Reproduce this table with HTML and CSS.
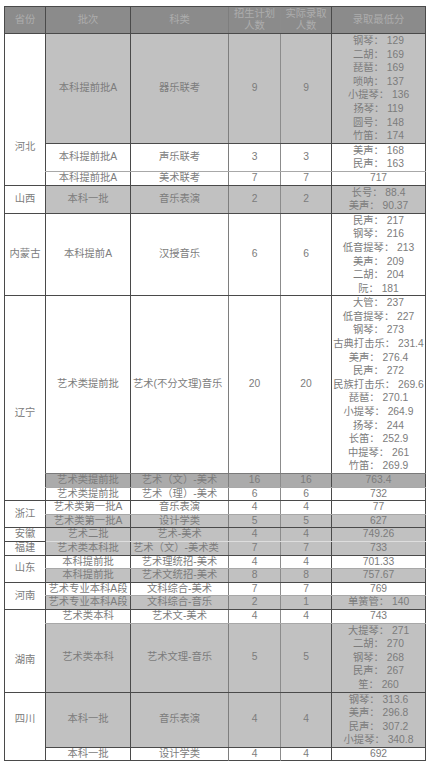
FILE: index.html
```html
<!DOCTYPE html>
<html lang="zh-CN">
<head>
<meta charset="utf-8">
<title>录取分数</title>
<link rel="stylesheet" href="styles.css">
</head>
<body>
<table class="tbl">
<colgroup>
<col class="c1"><col class="c2"><col class="c3"><col class="c4"><col class="c5"><col class="c6">
</colgroup>
<thead>
<tr class="head"><th>省份</th><th>批次</th><th>科类</th><th>招生计划<br>人数</th><th>实际录取<br>人数</th><th>录取最低分</th></tr>
</thead>
<tbody>
<tr class="g gr"><td class="pv pv-hb" rowspan="3">河北</td><td>本科提前批A</td><td>器乐联考</td><td>9</td><td>9</td><td class="sc">钢琴： 129<br>二胡： 169<br>琵琶： 169<br>唢呐： 137<br>小提琴： 136<br>扬琴： 119<br>圆号： 148<br>竹笛： 174</td></tr>
<tr class="g"><td>本科提前批A</td><td>声乐联考</td><td>3</td><td>3</td><td class="sc">美声： 168<br>民声： 163</td></tr>
<tr class="s"><td>本科提前批A</td><td>美术联考</td><td>7</td><td>7</td><td>717</td></tr>
<tr class="g gr"><td class="pv">山西</td><td>本科一批</td><td>音乐表演</td><td>2</td><td>2</td><td class="sc">长号： 88.4<br>美声： 90.37</td></tr>
<tr class="g"><td class="pv">内蒙古</td><td>本科提前A</td><td>汉授音乐</td><td>6</td><td>6</td><td class="sc">民声： 217<br>钢琴： 216<br>低音提琴： 213<br>美声： 209<br>二胡： 204<br>阮： 181</td></tr>
<tr class="g"><td class="pv pv-ln" rowspan="3">辽宁</td><td>艺术类提前批</td><td class="left">艺术(不分文理)音乐</td><td>20</td><td>20</td><td class="sc">大管： 237<br>低音提琴： 227<br>钢琴： 273<br>古典打击乐： 231.4<br>美声： 276.4<br>民声： 272<br>民族打击乐： 269.6<br>琵琶： 270.1<br>小提琴： 264.9<br>扬琴： 244<br>长笛： 252.9<br>中提琴： 261<br>竹笛： 269.9</td></tr>
<tr class="m gr2"><td>艺术类提前批</td><td>艺术（文）-美术</td><td>16</td><td>16</td><td>763.4</td></tr>
<tr class="s"><td>艺术类提前批</td><td>艺术（理）-美术</td><td>6</td><td>6</td><td>732</td></tr>
<tr class="g"><td class="pv" rowspan="2">浙江</td><td>艺术类第一批A</td><td>音乐表演</td><td>4</td><td>4</td><td>77</td></tr>
<tr class="s gr"><td>艺术类第一批A</td><td>设计学类</td><td>5</td><td>5</td><td>627</td></tr>
<tr class="g gr"><td class="pv">安徽</td><td>艺术二批</td><td>艺术-美术</td><td>4</td><td>4</td><td>749.26</td></tr>
<tr class="l gr"><td class="pv">福建</td><td>艺术类本科批</td><td class="left">艺术（文）-美术类</td><td>7</td><td>7</td><td>733</td></tr>
<tr class="g"><td class="pv" rowspan="2">山东</td><td>本科提前批</td><td>艺术理统招-美术</td><td>4</td><td>4</td><td>701.33</td></tr>
<tr class="s gr"><td>本科提前批</td><td>艺术文统招-美术</td><td>8</td><td>8</td><td>757.67</td></tr>
<tr class="g"><td class="pv" rowspan="2">河南</td><td>艺术专业本科A段</td><td>文科综合-美术</td><td>7</td><td>7</td><td>769</td></tr>
<tr class="s gr"><td>艺术专业本科A段</td><td>文科综合-音乐</td><td>2</td><td>1</td><td>单簧管： 140</td></tr>
<tr class="g"><td class="pv pv-hn" rowspan="2">湖南</td><td>艺术类本科</td><td>艺术文-美术</td><td>4</td><td>4</td><td>743</td></tr>
<tr class="s gr"><td>艺术类本科</td><td>艺术文理-音乐</td><td>5</td><td>5</td><td class="sc">大提琴： 271<br>二胡： 270<br>钢琴： 268<br>民声： 267<br>笙： 260</td></tr>
<tr class="g gr"><td class="pv pv-sc" rowspan="2">四川</td><td>本科一批</td><td>音乐表演</td><td>4</td><td>4</td><td class="sc">钢琴： 313.6<br>美声： 296.8<br>民声： 307.2<br>小提琴： 340.8</td></tr>
<tr class="g"><td>本科一批</td><td>设计学类</td><td>4</td><td>4</td><td>692</td></tr>
</tbody>
</table>
</body>
</html>
```

FILE: styles.css
```css
html, body {
  margin: 0;
  padding: 0;
  background: #ffffff;
}
body {
  padding: 6px 0 0 4px;
  font-family: "Liberation Sans", "Noto Sans CJK SC", sans-serif;
}
.tbl {
  border-collapse: collapse;
  table-layout: fixed;
  width: 421px;
  border-right: 1px solid #4a4a4a;
  border-bottom: 1px solid #4a4a4a;
  font-size: 10.3px;
  color: #7c7c7c;
}
.c1 { width: 41px; border-left: 1px solid #4a4a4a; }
.c2 { width: 85px; border-left: 1px solid #4a4a4a; }
.c3 { width: 98px; border-left: 1px solid #4a4a4a; }
.c4 { width: 52px; border-left: 1px solid #7e7e7e; }
.c5 { width: 51px; border-left: 1px solid #8c8c8c; }
.c6 { width: 94px; border-left: 1px solid #4a4a4a; }
.tbl td, .tbl th {
  padding: 0;
  text-align: center;
  vertical-align: middle;
  line-height: 12.6px;
  white-space: nowrap;
  font-weight: normal;
  overflow: visible;
}
.tbl .left { text-align: left; padding-left: 2px; }
.head {
  background: #8b8b8b;
  color: #adadad;
  border-top: 1px solid #4a4a4a;
}
.head th { height: 26px; line-height: 12.5px; }
.g { border-top: 1px solid #4a4a4a; }
.m { border-top: 1px solid #7a7a7a; }
.s { border-top: 1px solid #a8a8a8; }
.l { border-top: 1px solid #dedede; }
.gr > td { background: #c1c1c1; }
.gr2 > td { background: #ababab; }
.tbl td.pv {
  background: #ffffff;
  border-top: 1px solid #4a4a4a;
}
.tbl td.sc { line-height: 13.6px; }
.tbl td.pv-hb { padding-top: 76px; }
.tbl td.pv-ln { padding-top: 30px; }
.tbl td.pv-hn { padding-top: 20px; }
.tbl td.pv-sc { padding-bottom: 14px; }
```
